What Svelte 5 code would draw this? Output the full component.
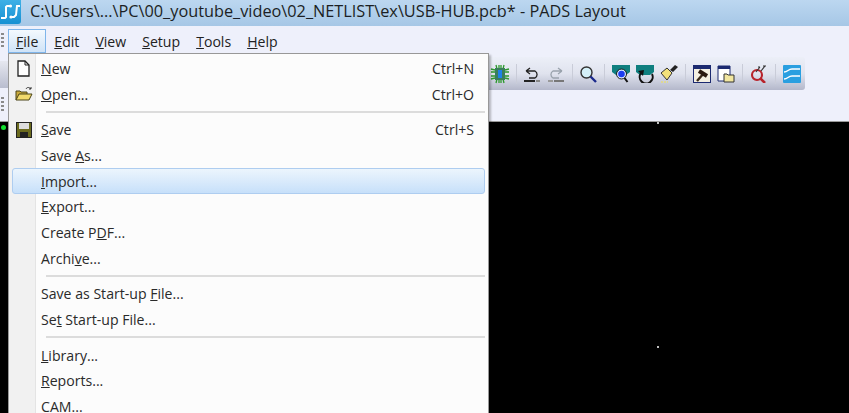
<script>
  const groups = [
    [
      { label: ['', 'N', 'ew'], key: 'Ctrl+N', icon: 'new' },
      { label: ['', 'O', 'pen...'], key: 'Ctrl+O', icon: 'open' }
    ],
    [
      { label: ['', 'S', 'ave'], key: 'Ctrl+S', icon: 'save' },
      { label: ['Save ', 'A', 's...'] },
      { label: ['', 'I', 'mport...'], active: true },
      { label: ['', 'E', 'xport...'] },
      { label: ['Create P', 'D', 'F...'] },
      { label: ['Archi', 'v', 'e...'] }
    ],
    [
      { label: ['Save as Start-up ', 'F', 'ile...'] },
      { label: ['Se', 't', ' Start-up File...'] }
    ],
    [
      { label: ['', 'L', 'ibrary...'] },
      { label: ['', 'R', 'eports...'] },
      { label: ['C', 'A', 'M...'] }
    ]
  ];
  const menus = [
    ['', 'F', 'ile'], ['', 'E', 'dit'], ['', 'V', 'iew'], ['', 'S', 'etup'], ['', 'T', 'ools'], ['', 'H', 'elp']
  ];
</script>

<div class="app">
  <header class="title">
    <svg class="logo" width="21" height="24" viewBox="0 0 21 24">
      <defs><linearGradient id="lg" x1="0" y1="0" x2="0" y2="1"><stop offset="0" stop-color="#3fb0e6"/><stop offset="1" stop-color="#1690d2"/></linearGradient></defs>
      <path d="M0 0h21v21a3 3 0 0 1-3 3H0z" fill="url(#lg)"/>
      <path d="M1 18h4l1-1V7l1-1h3M11 17h3l2-2 1-9h3" fill="none" stroke="#fff" stroke-width="2"/>
      <circle cx="10.5" cy="6" r="1.6" fill="#fff"/><circle cx="11" cy="17" r="1.6" fill="#fff"/>
    </svg>
    <span>C:\Users\...\PC\00_youtube_video\02_NETLIST\ex\USB-HUB.pcb* - PADS Layout</span>
  </header>

  <nav class="menubar">
    <i class="grip"></i>
    {#each menus as m, i}
      <span class="top" class:open={i === 0}>{m[0]}<u>{m[1]}</u>{m[2]}</span>
    {/each}
  </nav>

  <div class="toolrow">
    <div class="handle"></div>
    <div class="toolbar">
      <svg width="20" height="20" viewBox="0 0 20 20">
        <path d="M1 5l4 1M1 8h4M1 12h4M1 15l4-1M19 5l-4 1M19 8h-4M19 12h-4M19 15l-4-1M6 1l1 4M9 1v4M11 1v4M14 1l-1 4M6 19l1-4M9 19v-4M11 19v-4M14 19l-1-4" stroke="#2c9a2c" stroke-width="1.3"/>
        <rect x="5" y="4" width="10" height="12" fill="#3a7d5c"/><rect x="8" y="6" width="4" height="8" fill="#1f80e8"/>
      </svg>
      <b class="sep"></b>
      <svg width="18" height="18" viewBox="0 0 18 18">
        <path d="M3 6h9a4 4 0 0 1 0 7H6M3 6l4-3M3 6l4 3" fill="none" stroke="#222" stroke-width="1.3"/>
        <path d="M1 16h11" stroke="#222" stroke-width="2"/><path d="M13 16h4" stroke="#888" stroke-width="2"/>
      </svg>
      <svg width="18" height="18" viewBox="0 0 18 18">
        <path d="M15 6H6a4 4 0 0 0 0 7h6M15 6l-4-3M15 6l-4 3" fill="none" stroke="#9aa3ad" stroke-width="1.3"/>
        <path d="M1 16h5" stroke="#999" stroke-width="2"/><path d="M7 16h10" stroke="#777" stroke-width="2"/>
      </svg>
      <b class="sep"></b>
      <svg width="18" height="18" viewBox="0 0 18 18">
        <circle cx="7.5" cy="7.5" r="5.5" fill="#d5f0f8" stroke="#333" stroke-width="1.4"/>
        <path d="M11.5 11.5l5.5 5.5" stroke="#1b2a8c" stroke-width="2.4"/>
      </svg>
      <b class="sep"></b>
      <svg width="18" height="18" viewBox="0 0 18 18">
        <path d="M0 0h18v7l-4 3H4L0 7z" fill="#0f7f7f"/>
        <circle cx="9.5" cy="9" r="4" fill="#1c3cf0" stroke="#d8e8ff" stroke-width="1.4"/>
        <circle cx="9.5" cy="9" r="5" fill="none" stroke="#222"/>
        <path d="M12.5 13l3 4" stroke="#111" stroke-width="2"/>
      </svg>
      <svg width="18" height="18" viewBox="0 0 18 18">
        <path d="M0 0h18v7l-4 3H4L0 7z" fill="#0f7f7f"/>
        <path d="M16 9a6.5 6.5 0 1 1-11-1" fill="none" stroke="#111" stroke-width="2"/>
        <path d="M2 6l6-1-1 6z" fill="#111"/>
      </svg>
      <svg width="18" height="18" viewBox="0 0 18 18">
        <path d="M1 8l6-5 5 5-5 7z" fill="#f3e27a" stroke="#333"/>
        <path d="M10 5l5-5 3 2-5 5z" fill="#222"/>
        <path d="M1 17h7" stroke="#f2e34c" stroke-dasharray="2 1"/>
      </svg>
      <b class="sep"></b>
      <svg width="18" height="18" viewBox="0 0 18 18">
        <rect x=".5" y=".5" width="17" height="17" fill="#f4f0e2" stroke="#1c2a70"/>
        <rect x="1" y="1" width="16" height="3" fill="#1c2a70"/>
        <path d="M4 16l7-8" stroke="#3a2a1a" stroke-width="2.4"/>
        <path d="M6 6l8 5" stroke="#2a1a10" stroke-width="4"/>
      </svg>
      <svg width="18" height="18" viewBox="0 0 18 18">
        <path d="M1 1h12v15H1z" fill="#fff" stroke="#1c2a70"/>
        <rect x="1" y="1" width="12" height="3" fill="#1c2a70"/>
        <path d="M7 9h3l1 1h6v7H7z" fill="#f2e7a0" stroke="#333"/>
      </svg>
      <b class="sep"></b>
      <svg width="18" height="18" viewBox="0 0 18 18">
        <circle cx="7" cy="10" r="5" fill="none" stroke="#b8232b" stroke-width="2.1"/>
        <path d="M10 13l5 5" stroke="#b8232b" stroke-width="2.6"/>
        <path d="M6 7l4-5M11 6l4-5M8 2h2M13 1h3" stroke="#333" stroke-width="1.1"/>
      </svg>
      <b class="sep"></b>
      <svg width="18" height="18" viewBox="0 0 18 18">
        <rect width="18" height="18" rx="1" fill="#2a9fe0"/>
        <path d="M1 7c4 0 4-3 8-3h8M1 14c4 0 4-3 8-3h8" fill="none" stroke="#fff" stroke-width="1.4"/>
      </svg>
    </div>
  </div>

  <div class="handle2"><i class="grip"></i></div>

  <main class="canvas">
    <i class="led"></i>
    <i class="pt one"></i>
    <i class="pt two"></i>
  </main>

  <div class="menu">
    {#each groups as g, gi}
      {#if gi > 0}<hr />{/if}
      {#each g as item}
        <div class="item" class:active={item.active}>
          <span class="ico">
            {#if item.icon === 'new'}
              <svg width="15" height="17" viewBox="0 0 15 17"><path d="M2 1h7l4 4v11H2z" fill="#fff" stroke="#222" stroke-width="1.3"/><path d="M9 1v4h4" fill="none" stroke="#222"/></svg>
            {:else if item.icon === 'open'}
              <svg width="18" height="16" viewBox="0 0 18 16"><path d="M1 14V5h4l1 1h6v2" fill="#c9a93a" stroke="#4a4418"/><path d="M1 14l3-6h13l-3 6z" fill="#f2da6c" stroke="#4a4418"/><path d="M11 3c1-2 3-2 5 0M16 1v2h-2" fill="none" stroke="#333"/></svg>
            {:else if item.icon === 'save'}
              <svg width="16" height="16" viewBox="0 0 16 16"><rect x=".5" y=".5" width="15" height="15" fill="#6b6a1e" stroke="#222"/><rect x="3" y="1" width="10" height="6" fill="#ddd"/><rect x="4" y="10" width="8" height="5" fill="#222"/></svg>
            {/if}
          </span>
          <span class="text">{item.label[0]}<u>{item.label[1]}</u>{item.label[2]}</span>
          {#if item.key}<span class="key">{item.key}</span>{/if}
        </div>
      {/each}
    {/each}
  </div>
</div>

<style>
  :global(body) { margin: 0; }
  .app {
    position: relative;
    width: 849px;
    height: 413px;
    overflow: hidden;
    display: flex;
    flex-direction: column;
    background: #eef0fb;
    font-family: "Open Sans", "Noto Sans", sans-serif;
    color: #222;
  }
  .title {
    height: 26px;
    display: flex;
    align-items: flex-start;
    gap: 9px;
    background: linear-gradient(#bcd7f0, #a6c7e6);
    font-size: 16.3px;
    line-height: 22px;
    white-space: nowrap;
    color: #1c1f24;
  }
  .logo { flex: none; }
  .menubar {
    height: 29px;
    display: flex;
    align-items: center;
    font-size: 14.1px;
    box-sizing: border-box;
    padding-left: 1px;
  }
  .grip {
    display: block;
    width: 3px;
    height: 15px;
    margin-right: 4px;
    background: repeating-linear-gradient(#8a8a8a 0 2px, transparent 2px 4px);
  }
  .top {
    height: 24px;
    box-sizing: border-box;
    padding: 2px 7px 0;
    line-height: 19px;
    border: 1px solid transparent;
  }
  .open {
    border-color: #7fb5ea;
    background: linear-gradient(#f4f9fe, #cfe3f7);
  }
  .toolrow { height: 35px; display: flex; position: relative; }
  .handle { width: 8px; margin: 6px 0 2px; background: linear-gradient(#e6e8f0, #b9bdcf); }
  .toolbar {
    margin: 2px 0 0 474px;
    width: 323px;
    height: 33px;
    box-sizing: border-box;
    padding-left: 8px;
    display: flex;
    align-items: center;
    gap: 6px;
    border-radius: 3px;
    background: linear-gradient(#eceff8 0, #e0e3ee 50%, #b4b8cb 100%);
  }
  .sep {
    width: 1px;
    height: 20px;
    margin: 0 1px;
    background: #c9ccd8;
  }
  .sep:nth-of-type(1) { margin: 0; }
  .sep:nth-of-type(2) { margin: 0 .5px; }
  .handle2 { height: 31px; padding-top: 7px; box-sizing: border-box; padding-left: 1px; }
  .canvas {
    flex: 1;
    position: relative;
    background: #000;
    border-top: 1px solid #9a9a9a;
    box-sizing: border-box;
  }
  .led, .pt { position: absolute; display: block; border-radius: 50%; }
  .led { left: 1px; top: 3px; width: 5px; height: 5px; background: #12e030; }
  .pt { width: 2px; height: 2px; background: #fff; left: 657px; }
  .one { top: 0; }
  .two { top: 224px; }
  .menu {
    position: absolute;
    left: 8px;
    top: 53px;
    width: 481px;
    box-sizing: border-box;
    padding: 1.5px 3px 2px;
    border: 1px solid #989898;
    background: linear-gradient(90deg, #f1f1f1 0 26px, #e4e4e4 26px 27px, #fcfcfc 27px);
    font-size: 14.1px;
    box-shadow: 2px 2px 2px rgba(0,0,0,.25);
    color: #2a2a2a;
  }
  .item {
    height: 25.7px;
    display: flex;
    align-items: center;
    box-sizing: border-box;
    border: 1px solid transparent;
    border-radius: 3px;
  }
  .active {
    border-color: #aecdf0;
    background: linear-gradient(#ecf5fd, #c7e0fa);
  }
  .ico { width: 21px; flex: none; display: flex; justify-content: center; padding-right: 7px; }
  .key { margin-left: auto; margin-right: 10px; }
  hr {
    border: 0;
    height: 2px;
    background: #dcdcdc;
    margin: 4px 0 4px 34px;
  }
</style>
